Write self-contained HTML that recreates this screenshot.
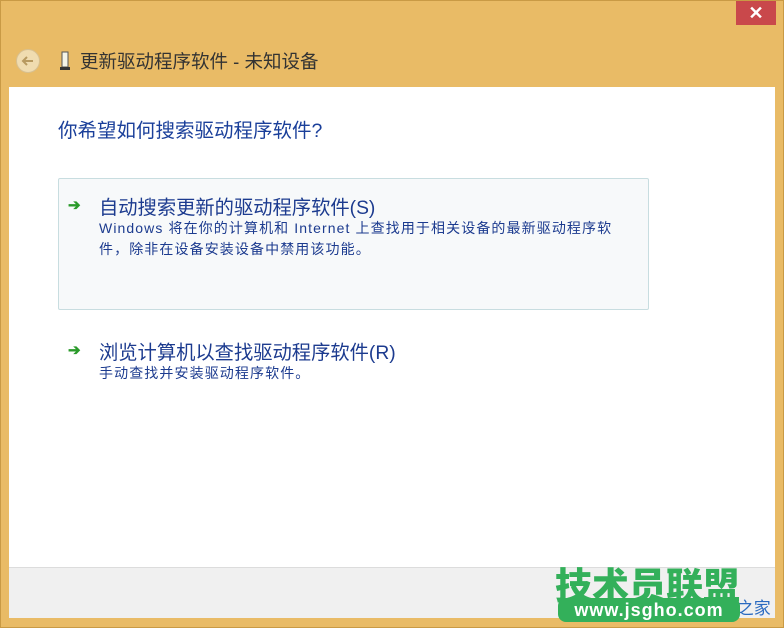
<!DOCTYPE html>
<html><head><meta charset="utf-8"><style>
*{margin:0;padding:0;box-sizing:border-box}
html,body{width:784px;height:628px;overflow:hidden}
body{background:#e9bb66;position:relative;font-family:"Liberation Sans","Noto Sans CJK SC",sans-serif;white-space:nowrap}
.frame{position:absolute;left:0;top:0;width:784px;height:628px;border:1px solid #c99a45}
.close{position:absolute;left:736px;top:1px;width:40px;height:24px;background:#c9484b;color:#fff;font-size:18px;text-align:center;line-height:24px;font-weight:bold}
.back{position:absolute;left:16px;top:49px;width:24px;height:24px;border-radius:50%;background:#f0dcb0;border:1px solid #d8c090}
.title{position:absolute;left:80px;top:48px;font-size:18.5px;color:#333}
.content{position:absolute;left:9px;top:87px;width:766px;height:480px;background:#fff}
.footer{position:absolute;left:9px;top:567px;width:766px;height:51px;background:#f0f0f0;border-top:1px solid #dcdcdc}
.q{position:absolute;left:58px;top:114px;font-size:19.5px;color:#1a3f9a}
.box{position:absolute;left:58px;top:178px;width:591px;height:132px;background:#f7f9fa;border:1px solid #c8dde0;border-radius:2px}
.arrow{position:absolute;color:#2a9a2a;font-size:15px;font-weight:bold}
.h{position:absolute;font-size:19.3px;color:#1c3b8f}
.d{position:absolute;font-size:14px;color:#1c3b8f;line-height:21px;letter-spacing:1.1px}
.logo{position:absolute;left:555px;top:556px;font-size:37px;font-weight:900;color:#33b05a;letter-spacing:0}
.url{position:absolute;left:558px;top:598px;width:182px;height:24px;background:#33b05a;border-radius:8px;color:#fff;font-size:18px;font-weight:bold;text-align:center;line-height:24px;letter-spacing:1px}
.win{position:absolute;left:664px;top:594px;font-size:17px;color:#2a6ac0}
</style></head><body>
<div class="frame"></div>
<div class="close">✕</div>
<div class="back"><svg width="22" height="22" viewBox="0 0 22 22"><path d="M16 11H6M10 7l-4 4 4 4" stroke="#b89a60" stroke-width="2" fill="none"/></svg></div>
<svg style="position:absolute;left:60px;top:51px" width="10" height="20"><rect x="2" y="1" width="6" height="15" fill="#f4f4e8" stroke="#555"/><rect x="0" y="16" width="10" height="3" fill="#333"/></svg>
<div class="title">更新驱动程序软件 - 未知设备</div>
<div class="content"></div>
<div class="footer"></div>
<div class="q">你希望如何搜索驱动程序软件?</div>
<div class="box"></div>
<div class="arrow" style="left:68px;top:196px">➔</div>
<div class="h" style="left:99px;top:192px">自动搜索更新的驱动程序软件(S)</div>
<div class="d" style="left:99px;top:218px">Windows 将在你的计算机和 Internet 上查找用于相关设备的最新驱动程序软<br>件，除非在设备安装设备中禁用该功能。</div>
<div class="arrow" style="left:68px;top:341px">➔</div>
<div class="h" style="left:99px;top:337px">浏览计算机以查找驱动程序软件(R)</div>
<div class="d" style="left:99px;top:363px">手动查找并安装驱动程序软件。</div>
<div class="win">Win8系统之家</div>
<div class="logo">技术员联盟</div>
<div class="url">www.jsgho.com</div>
</body></html>
